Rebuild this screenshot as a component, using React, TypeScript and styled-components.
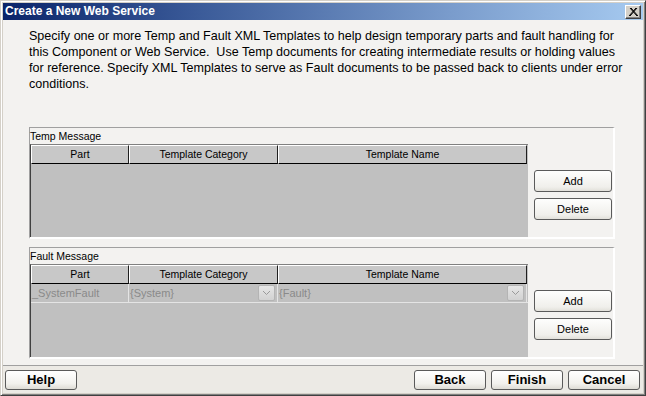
import React from "react";
import styled, { createGlobalStyle } from "styled-components";

const GlobalStyle = createGlobalStyle`
  html, body { margin: 0; padding: 0; background: #d4d0c8; }
  body { font-family: "Liberation Sans", Arial, sans-serif; }
  * { box-sizing: border-box; }
`;

const Window = styled.div`
  width: 646px;
  height: 396px;
  display: flex;
  flex-direction: column;
  background: #d4d0c8;
  border: 1px solid;
  border-color: #d4d0c8 #404040 #404040 #d4d0c8;
  box-shadow: inset 1px 1px 0 #ffffff, inset -1px -1px 0 #808080;
  padding: 2px;
`;

const TitleBar = styled.div`
  height: 17px;
  flex: none;
  display: flex;
  align-items: center;
  justify-content: space-between;
  padding: 0 2px 0 2px;
  background: linear-gradient(to right, #0a246a 0%, #3a5a98 30%, #7a9ccc 70%, #a6caf0 100%);
`;

const Title = styled.span`
  color: #ffffff;
  font-weight: bold;
  font-size: 12px;
  line-height: 17px;
  white-space: nowrap;
`;

const CloseButton = styled.div`
  width: 16px;
  height: 14px;
  display: flex;
  align-items: center;
  justify-content: center;
  background: #d4d0c8;
  border: 1px solid;
  border-color: #ffffff #404040 #404040 #ffffff;
  box-shadow: inset -1px -1px 0 #808080;
`;

const Body = styled.div`
  flex: 1;
  display: flex;
  flex-direction: column;
  background: #f3f2f0;
  padding: 8px 28px 0 26px;
`;

const Intro = styled.p`
  margin: 0 0 35px 0;
  font-size: 12.55px;
  line-height: 16px;
  color: #000000;
  white-space: nowrap;
`;

const Group = styled.div<{ $gap?: number }>`
  height: 112px;
  margin-bottom: ${(p) => p.$gap ?? 0}px;
  display: flex;
  flex-direction: column;
  border-style: solid;
  border-width: 1px 2px 2px 1px;
  border-color: #a0a0a0 #ffffff #ffffff #a0a0a0;
`;

const GroupLabel = styled.div`
  height: 16px;
  flex: none;
  font-size: 10.5px;
  line-height: 17px;
  color: #000000;
`;

const GroupContent = styled.div`
  flex: 1;
  display: flex;
  min-height: 0;
`;

const TablePane = styled.div`
  width: 498px;
  flex: none;
  display: flex;
  flex-direction: column;
  background: #c0c0c0;
  border-left: 1px solid #404040;
  border-top: 1px solid #808080;
`;

const HeaderRow = styled.div`
  display: flex;
  height: 19px;
  flex: none;
`;

const HeaderCell = styled.div<{ $w: number }>`
  width: ${(p) => p.$w}px;
  flex: none;
  background: #c8c8c8;
  border-style: solid;
  border-width: 1px;
  border-color: #ffffff #202020 #000000 #ffffff;
  font-size: 10.5px;
  line-height: 16px;
  text-align: center;
  color: #000000;
  white-space: nowrap;
`;

const DataRow = styled.div`
  display: flex;
  height: 19px;
  flex: none;
  border-bottom: 1px solid #e4e4e4;
`;

const DataCell = styled.div<{ $w: number }>`
  width: ${(p) => p.$w}px;
  flex: none;
  display: flex;
  align-items: center;
  justify-content: space-between;
  border-right: 1px solid #e4e4e4;
  padding: 0 2px 0 1px;
  font-size: 11px;
  color: #8a8a8a;
  white-space: nowrap;
`;

const ComboArrow = styled.div`
  width: 17px;
  height: 16px;
  display: flex;
  align-items: center;
  justify-content: center;
  border: 1px solid #b4b4b4;
  border-radius: 2px;
  background: linear-gradient(#e6e6e6, #d2d2d2);
`;

const ButtonColumn = styled.div`
  flex: 1;
  display: flex;
  flex-direction: column;
  gap: 6px;
  padding: 26px 1px 0 6px;
`;

const SideButton = styled.button`
  width: 78px;
  height: 22px;
  padding: 0;
  border: 1px solid #5a5a5a;
  border-radius: 3px;
  background: linear-gradient(#fefefd, #f0efeb 80%, #e2e0da);
  font-family: "Liberation Sans", Arial, sans-serif;
  font-size: 11px;
  color: #000000;
`;

const Footer = styled.div`
  height: 28px;
  flex: none;
  display: flex;
  align-items: flex-start;
  gap: 5px;
  padding: 4px 3px 0 2px;
  background: #eceae5;
  border-top: 1px solid #a0a0a0;
`;

const Spacer = styled.div`
  flex: 1;
`;

const FooterButton = styled.button`
  width: 72px;
  height: 20px;
  padding: 0;
  border: 1px solid #5a5a5a;
  border-radius: 3px;
  background: linear-gradient(#ffffff, #f2f1ed 70%, #dedcd5);
  font-family: "Liberation Sans", Arial, sans-serif;
  font-weight: bold;
  font-size: 13px;
  line-height: 18px;
  color: #000000;
`;

const Chevron = () => (
  <svg width="9" height="6" viewBox="0 0 9 6">
    <polyline points="1,1 4.5,4.5 8,1" fill="none" stroke="#9a9a9a" strokeWidth="1" />
  </svg>
);

const CloseX = () => (
  <svg width="9" height="8" viewBox="0 0 9 8">
    <path d="M1 0 L8 8 M8 0 L1 8 M2 0 L9 8 M7 0 L0 8" stroke="#000" strokeWidth="1" fill="none" />
  </svg>
);

const COLS = [98, 149, 249];

const MessageGroup = ({ label, gap, rows }: { label: string; gap?: number; rows: boolean }) => (
  <Group $gap={gap}>
    <GroupLabel>{label}</GroupLabel>
    <GroupContent>
      <TablePane>
        <HeaderRow>
          <HeaderCell $w={COLS[0]}>Part</HeaderCell>
          <HeaderCell $w={COLS[1]}>Template Category</HeaderCell>
          <HeaderCell $w={COLS[2]}>Template Name</HeaderCell>
        </HeaderRow>
        {rows && (
          <DataRow>
            <DataCell $w={COLS[0]}>_SystemFault</DataCell>
            <DataCell $w={COLS[1]}>
              {"{System}"}
              <ComboArrow>
                <Chevron />
              </ComboArrow>
            </DataCell>
            <DataCell $w={COLS[2]}>
              {"{Fault}"}
              <ComboArrow>
                <Chevron />
              </ComboArrow>
            </DataCell>
          </DataRow>
        )}
      </TablePane>
      <ButtonColumn>
        <SideButton>Add</SideButton>
        <SideButton>Delete</SideButton>
      </ButtonColumn>
    </GroupContent>
  </Group>
);

export default function App() {
  return (
    <>
      <GlobalStyle />
      <Window>
        <TitleBar>
          <Title>Create a New Web Service</Title>
          <CloseButton>
            <CloseX />
          </CloseButton>
        </TitleBar>
        <Body>
          <Intro>
            Specify one or more Temp and Fault XML Templates to help design temporary parts and fault handling for
            <br />
            this Component or Web Service.&nbsp; Use Temp documents for creating intermediate results or holding values
            <br />
            for reference. Specify XML Templates to serve as Fault documents to be passed back to clients under error
            <br />
            conditions.
          </Intro>
          <MessageGroup label="Temp Message" gap={8} rows={false} />
          <MessageGroup label="Fault Message" rows={true} />
        </Body>
        <Footer>
          <FooterButton>Help</FooterButton>
          <Spacer />
          <FooterButton>Back</FooterButton>
          <FooterButton>Finish</FooterButton>
          <FooterButton>Cancel</FooterButton>
        </Footer>
      </Window>
    </>
  );
}
